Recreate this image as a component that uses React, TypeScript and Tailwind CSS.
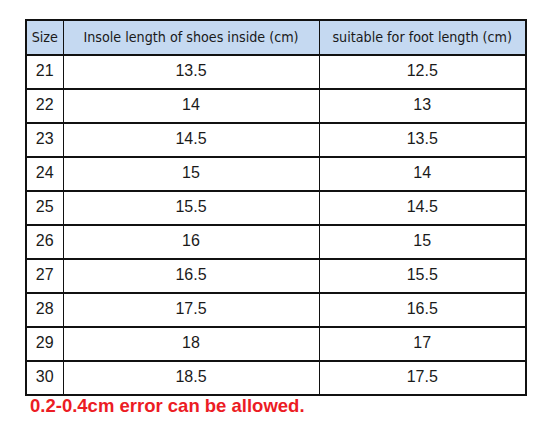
import React from "react";

const rows: [string, string, string][] = [
  ["21", "13.5", "12.5"],
  ["22", "14", "13"],
  ["23", "14.5", "13.5"],
  ["24", "15", "14"],
  ["25", "15.5", "14.5"],
  ["26", "16", "15"],
  ["27", "16.5", "15.5"],
  ["28", "17.5", "16.5"],
  ["29", "18", "17"],
  ["30", "18.5", "17.5"],
];

export default function App() {
  return (
    <div className="w-[559px] h-[432px] bg-white pt-[19px] pl-[25px]">
      <table className="border-collapse border-2 border-[#111] text-[#1a1a1a]">
        <thead>
          <tr className="h-[35px] bg-[#c5d9f1] text-[14.2px] [font-family:'DejaVu_Sans_Condensed','DejaVu_Sans',sans-serif]">
            <th className="w-[37px] border-x border-y-2 border-[#111] font-normal p-0">Size</th>
            <th className="w-[256px] border-x border-y-2 border-[#111] font-normal p-0">Insole length of shoes inside (cm)</th>
            <th className="w-[207px] border-x border-y-2 border-[#111] font-normal p-0">suitable for foot length (cm)</th>
          </tr>
        </thead>
        <tbody className="text-[16px] [font-family:'Liberation_Sans',Arial,sans-serif]">
          {rows.map((r) => (
            <tr key={r[0]} className="h-[34px]">
              <td className="border-x border-y-2 border-[#111] text-center p-0 pb-[2px]">{r[0]}</td>
              <td className="border-x border-y-2 border-[#111] text-center p-0 pb-[2px]">{r[1]}</td>
              <td className="border-x border-y-2 border-[#111] text-center p-0 pb-[2px]">{r[2]}</td>
            </tr>
          ))}
        </tbody>
      </table>
      <div className="pl-[5px] text-[18.5px] leading-[20px] font-bold text-[#ec1c24] [font-family:'Liberation_Sans',Arial,sans-serif]">
        0.2-0.4cm error can be allowed.
      </div>
    </div>
  );
}
